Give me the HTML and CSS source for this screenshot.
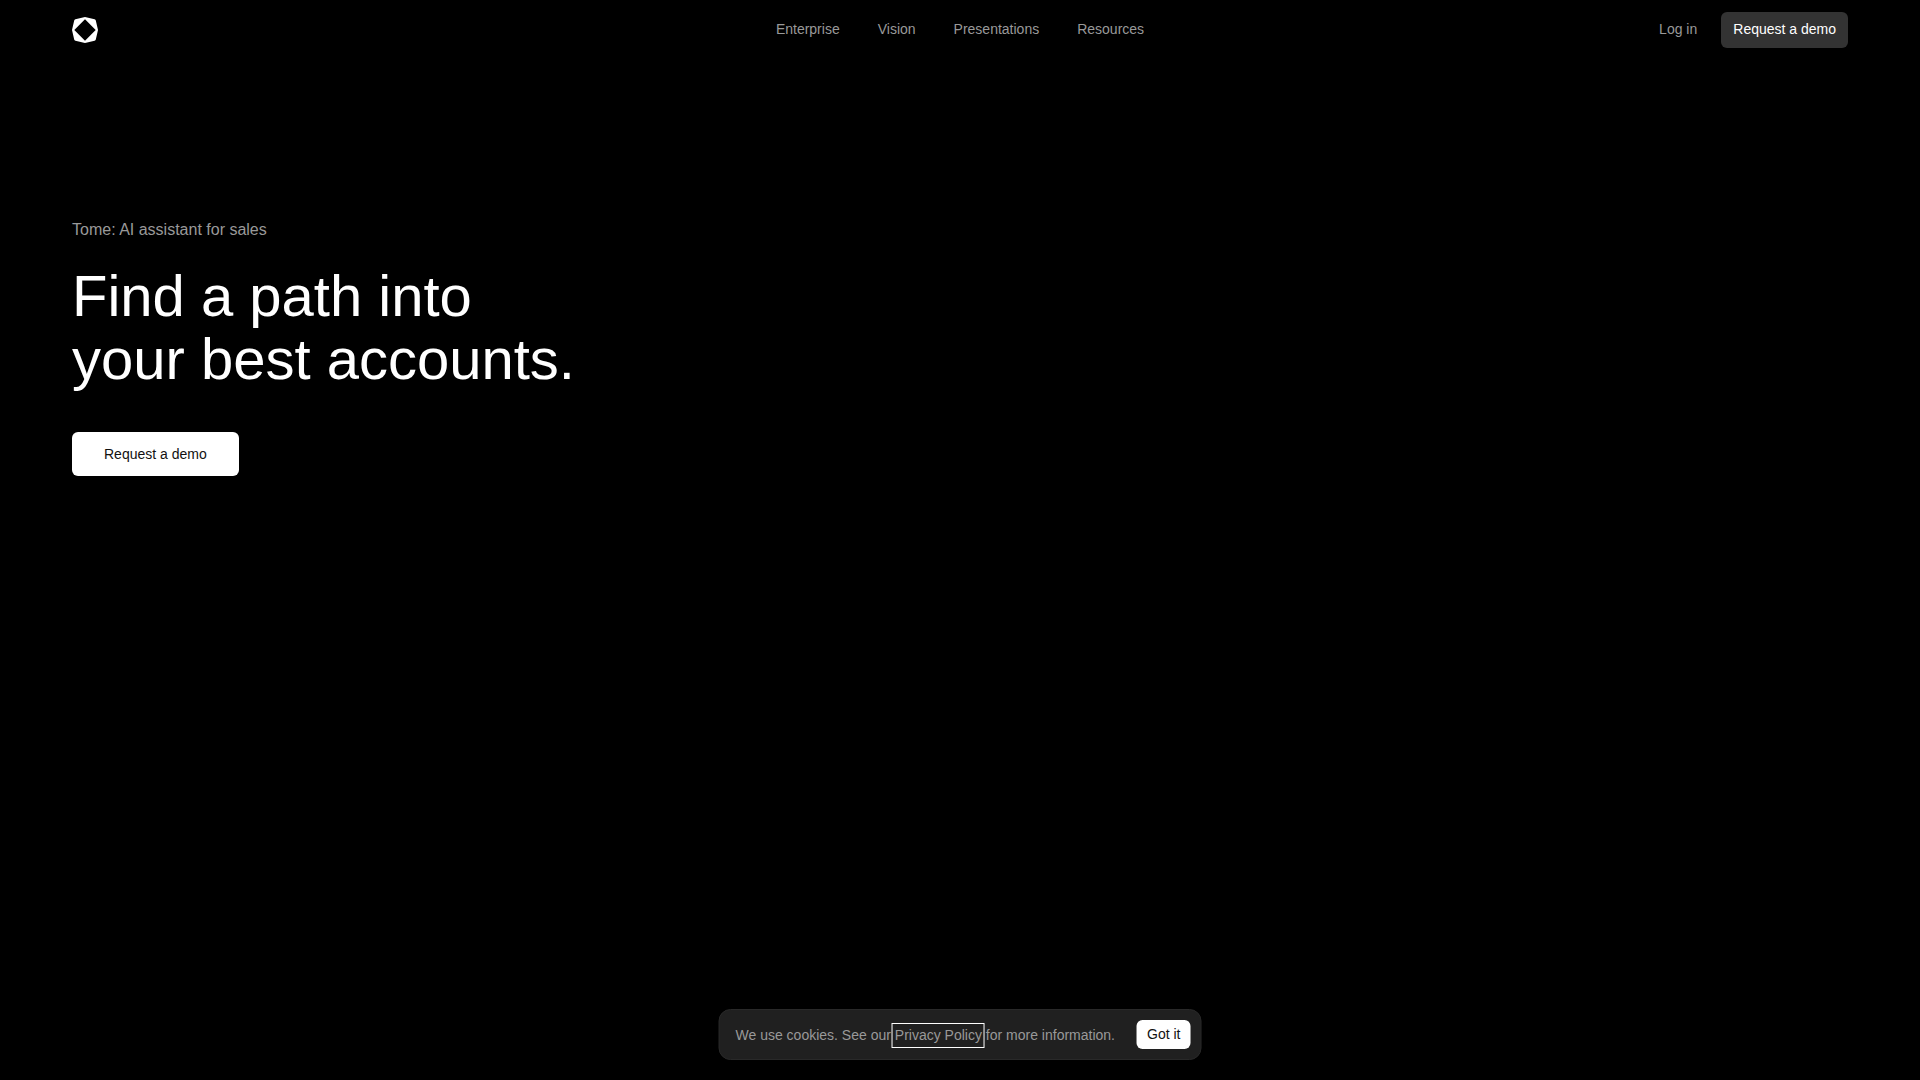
FILE: index.html
```html
<!DOCTYPE html>
<html lang="en">
<head>
<meta charset="utf-8">
<meta name="viewport" content="width=device-width, initial-scale=1">
<title>Tome</title>
<link rel="stylesheet" href="styles.css">
</head>
<body>
<header class="header">
  <a class="logo" href="#" aria-label="Tome">
    <svg width="26" height="26" viewBox="0 0 26 26" aria-hidden="true">
      <path fill="#fff" fill-rule="evenodd" d="M13 0 22.6 2.2Q23.6 2.5 23.8 3.4L26 13 23.8 22.6Q23.6 23.5 22.6 23.8L13 26 3.4 23.8Q2.4 23.5 2.2 22.6L0 13 2.2 3.4Q2.4 2.5 3.4 2.2ZM13 2.3 2.3 13 13 23.7 23.7 13Z"/>
    </svg>
  </a>
  <nav class="nav">
    <a href="#">Enterprise</a>
    <a href="#">Vision</a>
    <a href="#">Presentations</a>
    <a href="#">Resources</a>
  </nav>
  <div class="actions">
    <a class="login" href="#">Log in</a>
    <button class="button button-dark" type="button">Request a demo</button>
  </div>
</header>
<main class="hero">
  <p class="eyebrow">Tome: AI assistant for sales</p>
  <h1 class="title">Find a path into<br>your best accounts.</h1>
  <button class="button button-large" type="button">Request a demo</button>
</main>
<aside class="cookies" aria-label="Cookie notice">
  <p class="cookies-text">We use cookies. See our <a class="policy" href="#">Privacy Policy</a> for more information.</p>
  <button class="button button-small" type="button">Got it</button>
</aside>
</body>
</html>
```
FILE: styles.css
```css
* {
  box-sizing: border-box;
}

body {
  margin: 0;
  min-height: 100vh;
  background: #000;
  color: #fff;
  font-family: "Liberation Sans", Arial, sans-serif;
  font-size: 14px;
  line-height: 20px;
}

a {
  color: #999;
  text-decoration: none;
}

.header {
  display: grid;
  grid-template-columns: 1fr auto 1fr;
  align-items: center;
  height: 60px;
  padding: 0 72px;
}

.logo,
.logo svg {
  display: block;
  width: 26px;
}

.nav {
  display: flex;
  gap: 38px;
  padding-bottom: 2px;
}

.actions {
  display: flex;
  align-items: center;
  justify-content: flex-end;
  gap: 24px;
}

.login {
  padding-bottom: 2px;
}

.button {
  border: 0;
  border-radius: 6px;
  background: #fff;
  color: #111;
  font: inherit;
  white-space: nowrap;
}

.button-dark {
  padding: 7px 12px 9px;
  background: #333;
  color: #fff;
}

.button-large {
  padding: 12px 32px;
}

.button-small {
  padding: 4px 10px 5px;
}

.hero {
  padding: 160px 72px;
}

.eyebrow {
  margin: 0 0 24px;
  color: #999;
  font-size: 16px;
}

.title {
  margin: 0 0 42px;
  font-size: 58px;
  font-weight: 400;
  line-height: 63px;
}

.cookies {
  position: fixed;
  bottom: 20px;
  left: 50%;
  transform: translateX(-50%);
  display: flex;
  align-items: center;
  gap: 22px;
  padding: 10px;
  padding-left: 16px;
  border: 1px solid #292929;
  border-radius: 12px;
  background: #202020;
}

.cookies-text {
  margin: 0;
  color: #999;
  white-space: nowrap;
}

.policy {
  padding: 1px 0 2px;
  outline: 1px solid #fff;
  outline-offset: 2px;
}
```
